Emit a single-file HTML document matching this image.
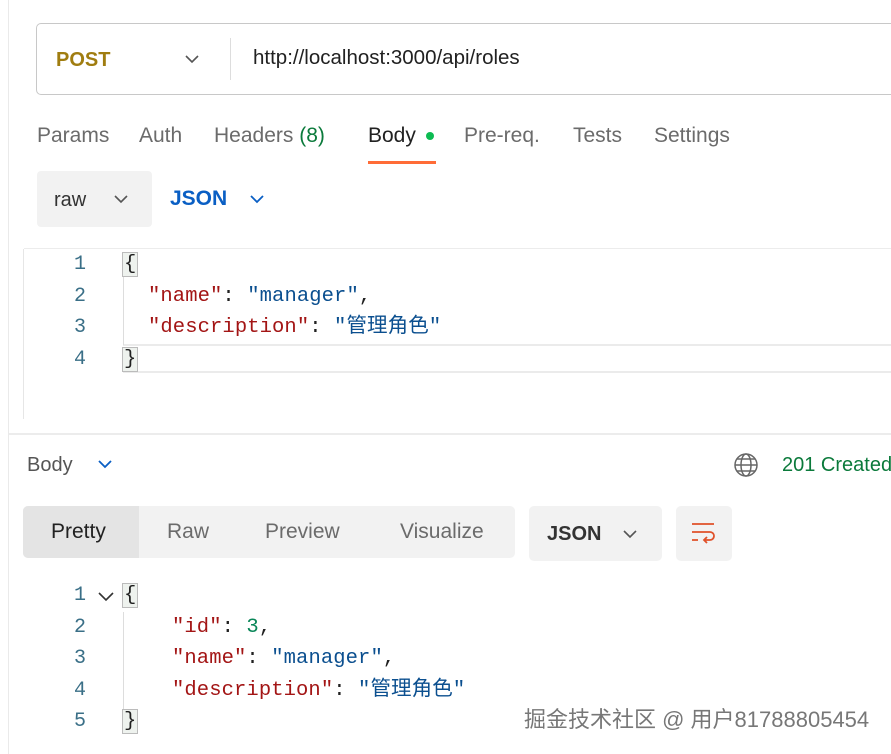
<!DOCTYPE html>
<html><head><meta charset="utf-8"><style>
*{margin:0;padding:0;box-sizing:border-box}
body{width:891px;height:754px;overflow:hidden;background:#fff;font-family:"Liberation Sans","Noto Sans CJK SC",sans-serif;position:relative;color:#212121}
.a{position:absolute;white-space:nowrap;line-height:24px}
.mono{font-family:"Liberation Mono","Noto Sans CJK SC",monospace;font-size:20.5px;letter-spacing:0.1px;line-height:24px}
.k{color:#a31515}.s{color:#0b4f8f}.n{color:#098658}.ln{color:#3a6f87;font-family:"Liberation Mono",monospace;font-size:20px}
.br{background:#eef2ee;border:1px solid #bbb;padding:0 1px}
.t{font-size:21px;color:#6b6b6b}
</style></head><body>
<div class="a" style="left:8px;top:0;width:1px;height:754px;background:#eaeaea"></div>
<div class="a" style="left:36px;top:23px;width:870px;height:72px;border:1px solid #c8c8c8;border-radius:5px"></div>
<div class="a" style="left:56px;top:48px;font-size:20px;font-weight:bold;color:#a07d10">POST</div>
<svg class="a" style="left:184px;top:53px" width="16" height="12"><path d="M2 3l6 6 6-6" fill="none" stroke="#555" stroke-width="1.6"/></svg>
<div class="a" style="left:230px;top:38px;width:1px;height:42px;background:#ddd"></div>
<div class="a" style="left:253px;top:46px;font-size:20.5px;color:#212121">http://localhost:3000/api/roles</div>

<div class="a t" style="left:37px;top:124px">Params</div>
<div class="a t" style="left:139px;top:124px">Auth</div>
<div class="a t" style="left:214px;top:124px">Headers <span style="color:#0b7a3b">(8)</span></div>
<div class="a t" style="left:368px;top:124px;color:#212121">Body</div>
<div class="a" style="left:426px;top:132px;width:8px;height:8px;border-radius:50%;background:#0cbb52"></div>
<div class="a" style="left:368px;top:161px;width:68px;height:3px;background:#ff6c37"></div>
<div class="a t" style="left:464px;top:124px">Pre-req.</div>
<div class="a t" style="left:573px;top:124px">Tests</div>
<div class="a t" style="left:654px;top:124px">Settings</div>

<div class="a" style="left:37px;top:171px;width:115px;height:56px;background:#f2f2f2;border-radius:4px"></div>
<div class="a" style="left:54px;top:188px;font-size:20px;color:#333">raw</div>
<svg class="a" style="left:113px;top:193px" width="16" height="12"><path d="M2 3l6 6 6-6" fill="none" stroke="#555" stroke-width="1.6"/></svg>
<div class="a" style="left:170px;top:187px;font-size:21px;font-weight:bold;color:#0a5fc4">JSON</div>
<svg class="a" style="left:249px;top:193px" width="16" height="12"><path d="M2 3l6 6 6-6" fill="none" stroke="#0a5fc4" stroke-width="1.8"/></svg>

<div class="a" style="left:24px;top:248px;width:870px;height:1px;background:#ececec"></div>
<div class="a" style="left:23px;top:249px;width:1px;height:170px;background:#e6e6e6"></div>
<div class="a" style="left:123px;top:344px;width:780px;height:2px;background:#ebebeb"></div>
<div class="a" style="left:123px;top:371px;width:780px;height:2px;background:#ebebeb"></div>
<div class="a" style="left:123px;top:252px;width:1px;height:93px;background:#ddd"></div>
<div class="a ln" style="left:74px;top:253px">1</div>
<div class="a ln" style="left:74px;top:285px">2</div>
<div class="a ln" style="left:74px;top:316px">3</div>
<div class="a ln" style="left:74px;top:348px">4</div>
<div class="a mono" style="left:122px;top:253px"><span class="br">{</span></div>
<div class="a mono" style="left:148px;top:285px"><span class="k">"name"</span>: <span class="s">"manager"</span>,</div>
<div class="a mono" style="left:148px;top:316px"><span class="k">"description"</span>: <span class="s">"管理角色"</span></div>
<div class="a mono" style="left:122px;top:348px"><span class="br">}</span></div>

<div class="a" style="left:9px;top:433px;width:882px;height:2px;background:#ececec"></div>
<div class="a" style="left:27px;top:453px;font-size:20px;color:#555">Body</div>
<svg class="a" style="left:97px;top:458px" width="16" height="12"><path d="M2 3l6 6 6-6" fill="none" stroke="#0a5fc4" stroke-width="1.8"/></svg>
<svg class="a" style="left:733px;top:452px" width="26" height="26" viewBox="0 0 26 26"><g fill="none" stroke="#666" stroke-width="1.5"><circle cx="13" cy="13" r="11"/><ellipse cx="13" cy="13" rx="5" ry="11"/><path d="M2 13h22M4 7h18M4 19h18"/></g></svg>
<div class="a" style="left:782px;top:453px;font-size:20px;color:#0b7a3b">201 Created</div>

<div class="a" style="left:23px;top:506px;width:492px;height:52px;background:#f2f2f2;border-radius:5px"></div>
<div class="a" style="left:23px;top:506px;width:116px;height:52px;background:#e4e4e4;border-radius:5px 0 0 5px"></div>
<div class="a" style="left:51px;top:520px;font-size:21px;color:#212121">Pretty</div>
<div class="a t" style="left:167px;top:520px">Raw</div>
<div class="a t" style="left:265px;top:520px">Preview</div>
<div class="a t" style="left:400px;top:520px">Visualize</div>
<div class="a" style="left:529px;top:506px;width:133px;height:55px;background:#f2f2f2;border-radius:5px"></div>
<div class="a" style="left:547px;top:522px;font-size:20px;font-weight:bold;color:#333">JSON</div>
<svg class="a" style="left:622px;top:528px" width="16" height="12"><path d="M2 3l6 6 6-6" fill="none" stroke="#555" stroke-width="1.6"/></svg>
<div class="a" style="left:676px;top:506px;width:56px;height:55px;background:#f2f2f2;border-radius:5px"></div>
<svg class="a" style="left:690px;top:520px" width="28" height="28" viewBox="0 0 28 28"><g fill="none" stroke="#e0512a" stroke-width="1.8"><path d="M2 4h22M2 12h18a4 4 0 0 1 0 8h-6M17 17l-3 3 3 3M2 20h6"/></g></svg>

<div class="a" style="left:123px;top:612px;width:1px;height:100px;background:#ddd"></div>
<div class="a ln" style="left:74px;top:584px">1</div>
<svg class="a" style="left:97px;top:590px" width="20" height="14"><path d="M2 3l7 7 7-7" fill="none" stroke="#333" stroke-width="1.6"/></svg>
<div class="a ln" style="left:74px;top:616px">2</div>
<div class="a ln" style="left:74px;top:647px">3</div>
<div class="a ln" style="left:74px;top:679px">4</div>
<div class="a ln" style="left:74px;top:710px">5</div>
<div class="a mono" style="left:122px;top:584px"><span class="br">{</span></div>
<div class="a mono" style="left:172px;top:616px"><span class="k">"id"</span>: <span class="n">3</span>,</div>
<div class="a mono" style="left:172px;top:647px"><span class="k">"name"</span>: <span class="s">"manager"</span>,</div>
<div class="a mono" style="left:172px;top:679px"><span class="k">"description"</span>: <span class="s">"管理角色"</span></div>
<div class="a mono" style="left:122px;top:710px"><span class="br">}</span></div>
<div class="a" style="left:524px;top:708px;font-size:22px;color:#777;text-shadow:0 0 2px #fff;letter-spacing:0px">掘金技术社区 @ 用户81788805454</div>
</body></html>
